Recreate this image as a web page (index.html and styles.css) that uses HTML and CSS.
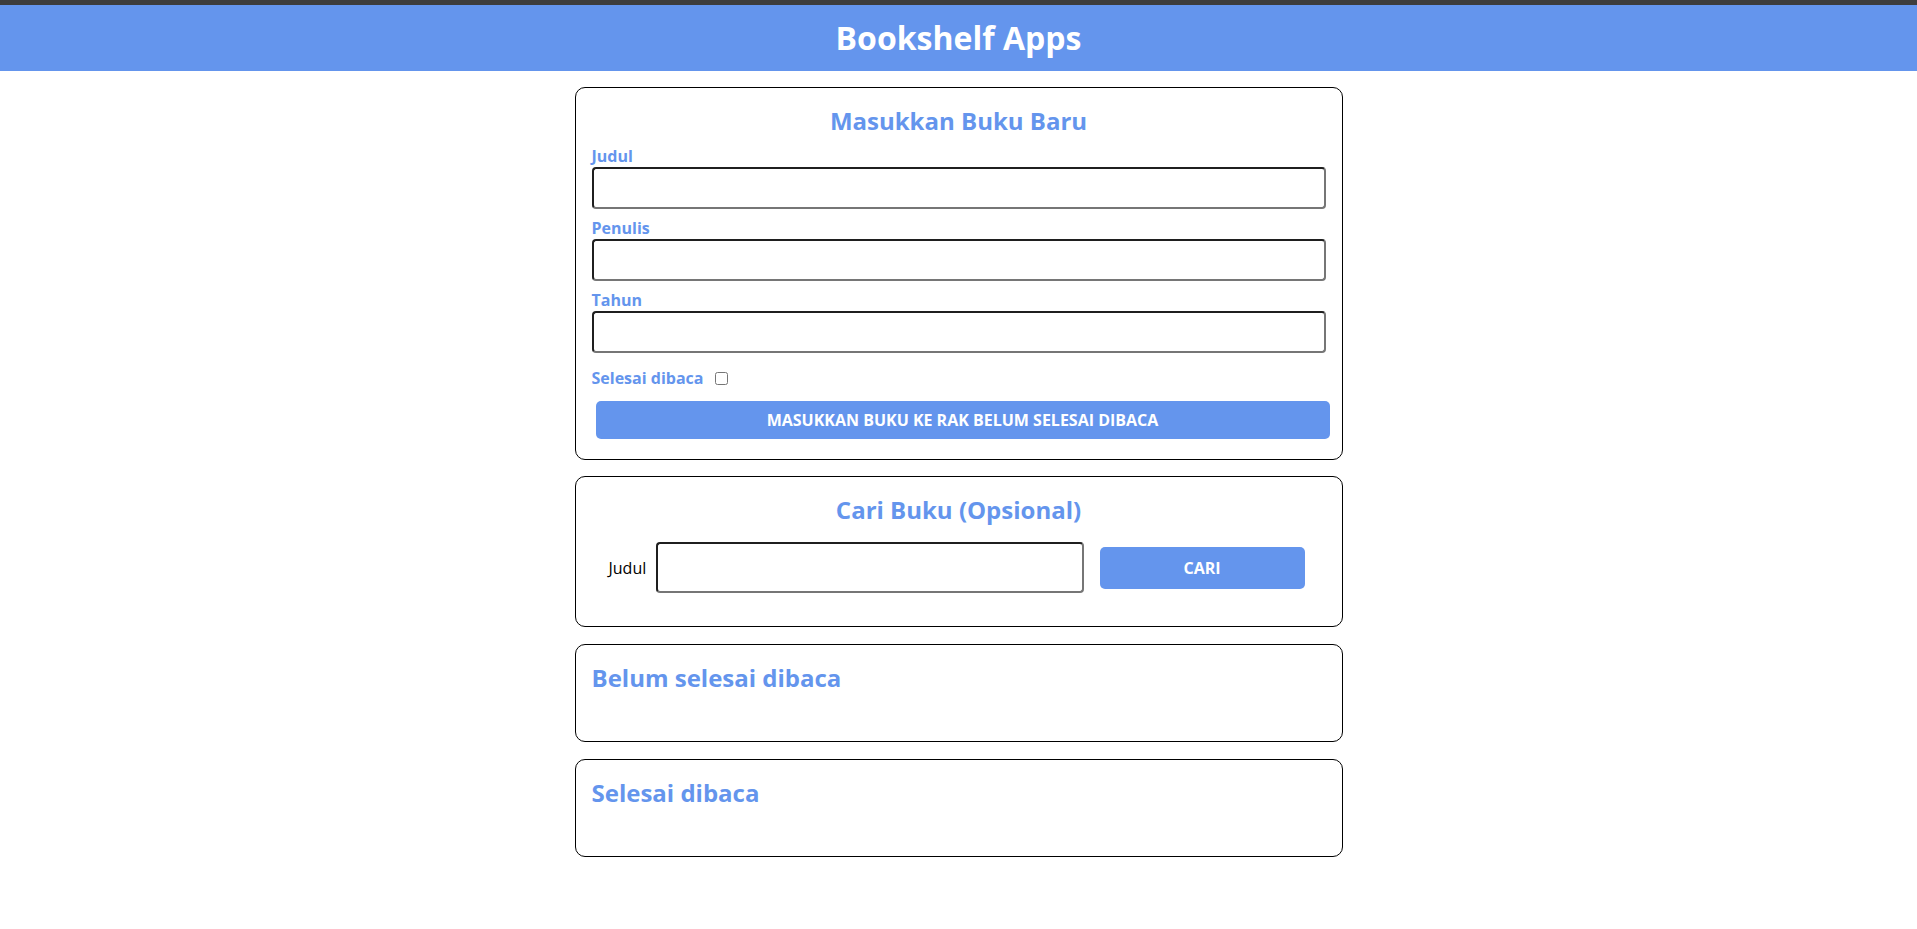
FILE: index.html
```html
<!DOCTYPE html>
<html lang="id">
<head>
    <meta charset="UTF-8">
    <meta name="viewport" content="width=device-width, initial-scale=1.0">
    <title>Bookshelf Apps</title>
    <link rel="stylesheet" href="styles.css">
</head>
<body>
    <header class="head-bar">
        <h1>Bookshelf Apps</h1>
    </header>

    <main class="main">
        <section class="input-section">
            <h2>Masukkan Buku Baru</h2>
            <form id="inputBook">
                <div class="input">
                    <label for="inputBookTitle">Judul</label>
                    <input id="inputBookTitle" type="text" required>
                </div>
                <div class="input">
                    <label for="inputBookAuthor">Penulis</label>
                    <input id="inputBookAuthor" type="text" required>
                </div>
                <div class="input">
                    <label for="inputBookYear">Tahun</label>
                    <input id="inputBookYear" type="number" required>
                </div>
                <div class="input-inline">
                    <label for="inputBookIsComplete">Selesai dibaca</label>
                    <input id="inputBookIsComplete" type="checkbox">
                </div>
                <button id="bookSubmit" type="submit">Masukkan Buku ke rak <span>Belum selesai dibaca</span></button>
            </form>
        </section>

        <section class="search-section">
            <h2>Cari Buku (Opsional)</h2>
            <form id="searchBook">
                <label for="searchBookTitle">Judul</label>
                <input id="searchBookTitle" type="text">
                <button id="searchSubmit" type="submit">Cari</button>
            </form>
        </section>

        <section class="book-shelf">
            <h2>Belum selesai dibaca</h2>
            <div id="incompleteBookshelfList" class="book-list"></div>
        </section>

        <section class="book-shelf">
            <h2>Selesai dibaca</h2>
            <div id="completeBookshelfList" class="book-list"></div>
        </section>
    </main>
</body>
</html>
```

FILE: styles.css
```css
* {
    box-sizing: border-box;
    margin: 0;
    padding: 0;
}

body {
    font-family: "Open Sans", sans-serif;
    color: #000;
    background-color: #fff;
}

.head-bar {
    border-top: 5px solid #3d3d3d;
    background-color: cornflowerblue;
    color: white;
    text-align: center;
    padding: 11px 0 12px;
}

.head-bar h1 {
    font-size: 32px;
}

.main {
    max-width: 768px;
    margin: 16px auto;
}

.input-section, .search-section, .book-shelf {
    border: 1px solid black;
    border-radius: 10px;
    padding: 16px;
    margin-bottom: 16px;
}

.search-section, .book-shelf {
    margin-bottom: 17px;
}

h2 {
    font-size: 24px;
    color: cornflowerblue;
    margin-bottom: 8px;
}

.input-section h2, .search-section h2 {
    text-align: center;
}

.input label, .input-inline label {
    display: block;
    color: cornflowerblue;
    font-weight: bold;
    font-size: 16px;
}

.input input, #searchBookTitle {
    display: block;
    width: 100%;
    height: 42px;
    border: 2px solid;
    border-color: #1f1f1f #767676 #767676 #1f1f1f;
    border-radius: 4px;
    padding: 5px;
    font-family: inherit;
    font-size: 16px;
}

.input {
    margin-bottom: 8px;
}

.input-inline {
    display: flex;
    align-items: center;
    gap: 8px;
    margin: 14px 0 12px;
}

.input-inline input {
    width: 13px;
    height: 13px;
    margin: 0 4px;
}

.input-section button {
    display: block;
    width: 100%;
    height: 38px;
    margin: 4px;
    background-color: cornflowerblue;
    color: white;
    border: none;
    border-radius: 5px;
    font-family: inherit;
    font-size: 16px;
    font-weight: bold;
    text-transform: uppercase;
    cursor: pointer;
}

#searchBook {
    display: flex;
    align-items: center;
    padding: 8px 21px 17px 17px;
}

#searchBook label {
    font-size: 16px;
    margin-right: 10px;
}

#searchBookTitle {
    flex: 1;
    height: 51px;
}

#searchSubmit {
    width: 205px;
    height: 42px;
    margin-left: 16px;
    background-color: cornflowerblue;
    color: white;
    border: none;
    border-radius: 5px;
    font-family: inherit;
    font-size: 16px;
    font-weight: bold;
    text-transform: uppercase;
    cursor: pointer;
}

.book-list {
    min-height: 23px;
}
```
